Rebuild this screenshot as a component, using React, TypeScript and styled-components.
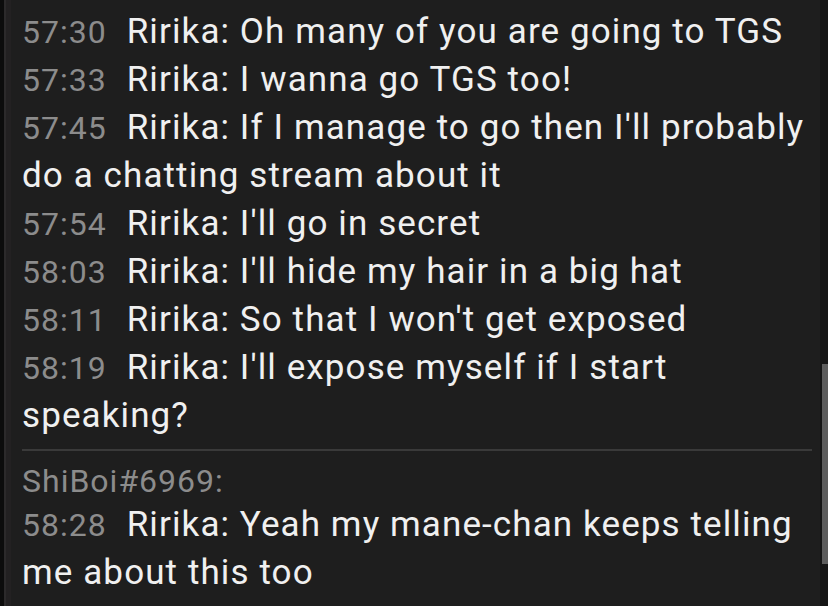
import React from "react";
import styled, { createGlobalStyle } from "styled-components";

const Global = createGlobalStyle`
  html, body { margin: 0; padding: 0; background: #1e1e1e; }
  body { width: 828px; height: 606px; overflow: hidden; }
`;

const Frame = styled.div`
  display: flex;
  width: 828px;
  height: 606px;
  background: #1e1e1e;
  font-family: Roboto, "Noto Sans", sans-serif;
  overflow: hidden;
`;

const Edge = styled.div`
  width: 4px;
  flex: none;
  background: #0c0c0c;
  border-right: 2px solid #2c2a2b;
`;

const Gutter = styled.div`
  width: 5px;
  flex: none;
  background: #232122;
`;

const Feed = styled.div`
  flex: 1;
  display: flex;
  flex-direction: column;
  padding: 8px 8px 0 11px;
`;

const Group = styled.div`
  display: flex;
  flex-direction: column;
`;

const Message = styled.div`
  font-size: 35px;
  line-height: 48px;
  color: #f0f0f0;
  letter-spacing: 1.1px;
`;

const Time = styled.span`
  font-size: 32px;
  color: #8c8c8c;
  letter-spacing: 1px;
  margin-right: 20px;
`;

const Divider = styled.hr`
  border: none;
  height: 2px;
  background: #3a3a3a;
  margin: 9px 0 10px 0;
`;

const Author = styled.div`
  font-size: 32px;
  line-height: 40px;
  letter-spacing: 1px;
  color: #8c8c8c;
`;

const Track = styled.div`
  width: 8px;
  flex: none;
  background: #151515;
  display: flex;
  flex-direction: column;
  justify-content: flex-start;
  padding-top: 364px;
  box-sizing: border-box;
  align-items: flex-end;
`;

const Thumb = styled.div`
  width: 6px;
  height: 200px;
  background: #5c5c5c;
`;

const first = [
  ["57:30", "Ririka: Oh many of you are going to TGS"],
  ["57:33", "Ririka: I wanna go TGS too!"],
  ["57:45", "Ririka: If I manage to go then I'll probably do a chatting stream about it"],
  ["57:54", "Ririka: I'll go in secret"],
  ["58:03", "Ririka: I'll hide my hair in a big hat"],
  ["58:11", "Ririka: So that I won't get exposed"],
  ["58:19", "Ririka: I'll expose myself if I start speaking?"],
];

const second = [["58:28", "Ririka: Yeah my mane-chan keeps telling me about this too"]];

export default function App() {
  return (
    <Frame>
      <Global />
      <Edge />
      <Gutter />
      <Feed>
        <Group>
          {first.map(([t, m]) => (
            <Message key={t}>
              <Time>{t}</Time>
              {m}
            </Message>
          ))}
        </Group>
        <Divider />
        <Group>
          <Author>ShiBoi#6969:</Author>
          {second.map(([t, m]) => (
            <Message key={t}>
              <Time>{t}</Time>
              {m}
            </Message>
          ))}
        </Group>
      </Feed>
      <Track>
        <Thumb />
      </Track>
    </Frame>
  );
}
